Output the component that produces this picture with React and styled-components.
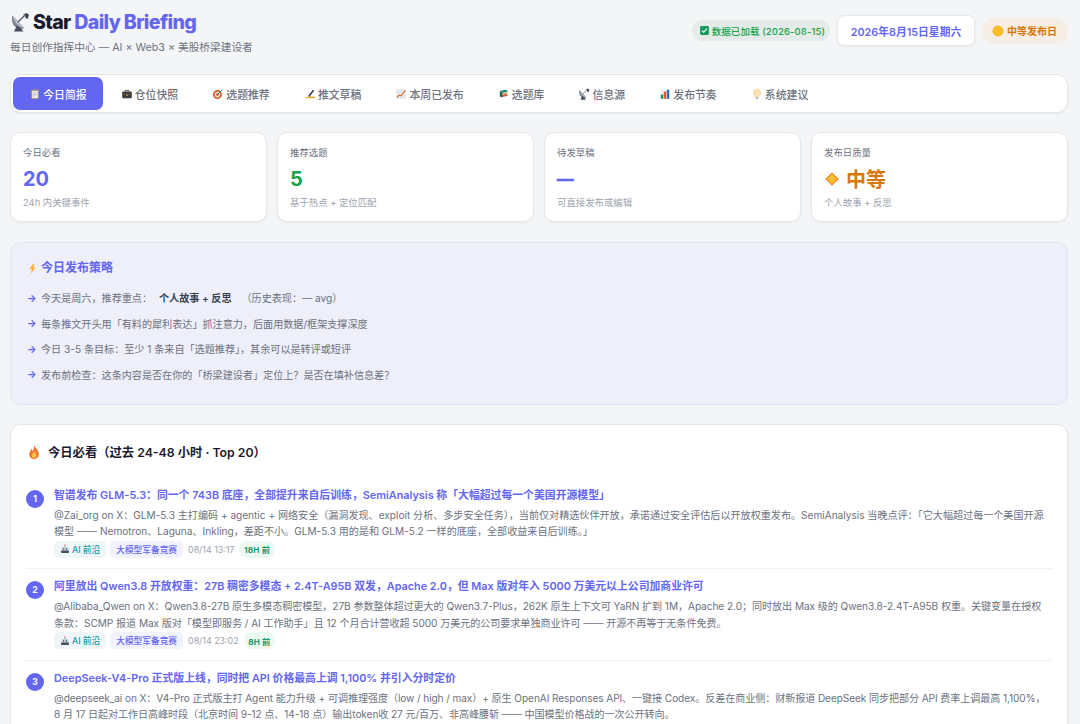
import React from 'react';
import styled, { createGlobalStyle } from 'styled-components';

const Global = createGlobalStyle`
  html, body { margin: 0; padding: 0; height: 724px; overflow: hidden; background: #f4f5f7; }
  body { font-family: Inter, "Noto Sans CJK SC", sans-serif; color: #1a1a2e; -webkit-font-smoothing: antialiased; }
  * { box-sizing: border-box; }
`;

const Page = styled.div`
  padding: 11px 12px 0 10px;
`;
const Header = styled.header`
  display: flex;
  justify-content: space-between;
  align-items: flex-start;
  height: 63px;
`;
const Brand = styled.div`
  display: flex;
  flex-direction: column;
  gap: 8px;
`;
const Title = styled.h1`
  margin: 0;
  display: flex;
  align-items: center;
  gap: 3px;
  font-size: 19.6px;
  line-height: 22px;
  font-weight: 800;
  letter-spacing: -0.65px;
  color: #1a1a2e;
  span { color: #6366f1; }
`;
const Sub = styled.div`
  font-size: 10.7px;
  line-height: 14px;
  color: #6b7280;
`;
const Meta = styled.div`
  display: flex;
  align-items: center;
  gap: 7px;
  margin-top: 4px;
`;
const LoadBadge = styled.div`
  display: flex;
  align-items: center;
  gap: 2px;
  height: 21px;
  padding: 0 5px 0 7px;
  border-radius: 11px;
  background: #e4ebe9;
  color: #16a34a;
  font-size: 9.5px;
  font-weight: 500;
  letter-spacing: 0.1px;
`;
const DateBox = styled.div`
  width: 138px;
  height: 31px;
  display: flex;
  align-items: center;
  justify-content: center;
  background: #fff;
  border: 1px solid #e5e7eb;
  border-radius: 7px;
  box-shadow: 0 1px 2px rgba(0,0,0,.05);
  color: #6366f1;
  font-size: 10.8px;
  font-weight: 600;
`;
const DayPill = styled.div`
  display: flex;
  align-items: center;
  gap: 3px;
  width: 86px;
  height: 26px;
  padding-left: 10px;
  border-radius: 13px;
  background: #f6ede5;
  color: #d97706;
  font-size: 10px;
  font-weight: 600;
`;
const Tabs = styled.nav`
  display: flex;
  gap: 2px;
  height: 39px;
  padding: 2px;
  background: #fff;
  border: 1px solid #e5e7eb;
  border-radius: 11px;
  box-shadow: 0 1px 2px rgba(0,0,0,.06);
`;
const Tab = styled.div`
  display: flex;
  align-items: center;
  gap: 2.2px;
  height: 33px;
  padding: 0 16px;
  border-radius: 7px;
  font-size: 10.85px;
  font-weight: 500;
  white-space: nowrap;
  color: ${p => (p.$active ? '#fff' : '#6b7280')};
  background: ${p => (p.$active ? '#6366f1' : 'transparent')};
`;
const Cards = styled.section`
  display: grid;
  grid-template-columns: repeat(4, 1fr);
  gap: 10px;
  margin-top: 19px;
`;
const Card = styled.div`
  height: 90px;
  padding: 14px 12px;
  background: #fff;
  border: 1px solid #e5e7eb;
  border-radius: 10px;
  box-shadow: 0 1px 2px rgba(0,0,0,.05);
`;
const CardLabel = styled.div`
  font-size: 9.4px;
  line-height: 12px;
  color: #6b7280;
`;
const CardValue = styled.div`
  display: flex;
  align-items: center;
  gap: 6px;
  margin-top: 6px;
  height: 27px;
  font-size: 20px;
  font-weight: 700;
  color: ${p => p.$color};
`;
const Dash = styled.span`
  font-size: 16.5px;
  -webkit-text-stroke: 0.7px #6366f1;
`;
const CardHint = styled.div`
  margin-top: 5px;
  font-size: 9.4px;
  line-height: 12px;
  color: #9ca3af;
`;
const Strategy = styled.section`
  margin-top: 20px;
  height: 163px;
  padding: 17px 16px;
  background: #eeeff9;
  border: 1px solid #e2e3f6;
  border-radius: 11px;
`;
const StrategyTitle = styled.h3`
  margin: 0 0 9px;
  display: flex;
  align-items: center;
  gap: 3px;
  font-size: 12px;
  line-height: 16px;
  font-weight: 600;
  color: #6366f1;
`;
const Rule = styled.div`
  display: flex;
  align-items: center;
  height: 25.5px;
  font-size: 10.1px;
  color: #6b7280;
  white-space: pre;
  i { font-style: normal; font-weight: 700; color: #6366f1; width: 14px; font-size: 10px; flex: none; }
  b { font-weight: 600; color: #374151; margin: 0 10px 0 7px; }
`;
const Panel = styled.section`
  margin-top: 19px;
  padding: 18px 15px 0;
  background: #fff;
  border: 1px solid #e5e7eb;
  border-radius: 11px;
  box-shadow: 0 1px 2px rgba(0,0,0,.05);
`;
const PanelTitle = styled.h2`
  margin: 0 0 16.5px;
  display: flex;
  align-items: center;
  gap: 6px;
  height: 18px;
  font-size: 12.3px;
  font-weight: 600;
  color: #1a1a2e;
`;
const Item = styled.article`
  display: flex;
  gap: 10px;
  padding: 8px 0 0;
  height: 91.5px;
  border-bottom: 1px solid #f0f1f3;
`;
const Num = styled.div`
  flex: none;
  width: 18px;
  height: 18px;
  margin-top: 4px;
  border-radius: 50%;
  background: #6366f1;
  color: #fff;
  font-size: 8.6px;
  font-weight: 700;
  display: flex;
  align-items: center;
  justify-content: center;
`;
const ItemBody = styled.div`
  flex: 1;
  min-width: 0;
`;
const ItemTitle = styled.h4`
  margin: 0 0 3px;
  font-size: 10.85px;
  line-height: 18px;
  font-weight: 600;
  color: #6366f1;
`;
const ItemText = styled.p`
  margin: 0;
  max-width: 995px;
  font-size: 10.08px;
  line-height: 16.5px;
  letter-spacing: ${p => p.$track}px;
  color: #6b7280;
`;
const Tags = styled.div`
  display: flex;
  align-items: center;
  gap: 4px;
  margin-top: 1px;
`;
const Tag = styled.span`
  display: inline-flex;
  align-items: center;
  gap: 2px;
  height: 17px;
  padding: 0 6px;
  border-radius: 5px;
  font-size: 8.7px;
  font-weight: 500;
  color: ${p => p.$color};
  background: ${p => p.$bg};
`;
const Time = styled.span`
  margin: 0 1px 0 1px;
  font-size: 8.9px;
  color: #9ca3af;
`;
const Ago = styled.span`
  display: inline-flex;
  align-items: center;
  height: 17px;
  padding: 0 4.5px;
  border-radius: 8px;
  background: #ecf8f2;
  color: #159a6a;
  font-size: 8.2px;
  letter-spacing: 0.2px;
  font-weight: 700;
`;
const Glyph = styled.svg`
  flex: none;
  display: block;
`;

const drawings = {
  dish: <><path d="M2.500 3.500c-2 6 1 13 8 13.500 2 .1 3.300-.5 3.500-1z" fill="#7c8792"/><path d="M2.500 3.500L14 16c-5-.5-10-5.500-11.500-12.500z" fill="#b4bcc5"/><path d="M8 10l6.500-6.500" stroke="#4b5563" strokeWidth="1.200"/><path d="M13 2.500l4-1.500 2 2-1.500 4-2-1-.5-2.500z" fill="#3f4852"/><path d="M4 19.500l3-6 4 3 2.500 3z" fill="#47505a"/></>,
  clip: <><rect x="4" y="3" width="12" height="15" rx="1.500" fill="#c9a676"/><rect x="5.500" y="5" width="9" height="11.500" fill="#f3f4f6"/><rect x="7" y="1.800" width="6" height="3" rx="1" fill="#8b939c"/><path d="M7 8h6M7 10.500h6M7 13h4" stroke="#9ca3af"/></>,
  case: <><path d="M7 6V4h6v2" fill="none" stroke="#4b3a2f" strokeWidth="1.400"/><rect x="2" y="6" width="16" height="11" rx="1.500" fill="#3f3a38"/><rect x="8.500" y="10" width="3" height="3" fill="#c49a45"/><path d="M2 11h16" stroke="#6b5f55"/></>,
  dart: <><circle cx="9" cy="11" r="7.500" fill="#d9572f"/><circle cx="9" cy="11" r="4.700" fill="#f4e2c4"/><circle cx="9" cy="11" r="2.300" fill="#d9572f"/><path d="M9 11l8-8" stroke="#0e8f8f" strokeWidth="1.600"/></>,
  write: <><path d="M2 16c3-2 6-2 16-2v3H3z" fill="#f3a82f"/><path d="M7 13L15 3l2 1.500L9 15z" fill="#384150"/></>,
  chart: <><rect x="2" y="2" width="16" height="16" fill="#e5e7eb"/><path d="M3 16l4-4 3 1 7-9" fill="none" stroke="#e0672a" strokeWidth="1.700"/></>,
  books: <><path d="M3 5l10-2 4 3-10 2z" fill="#16806f"/><path d="M3 9l11-2 3 2-10 2z" fill="#d8a25a"/><path d="M4 12l10-2 3 3-10 2z" fill="#c2573d"/><path d="M3 5v9l4 2V8z" fill="#2c5f52"/></>,
  bars: <><rect x="2" y="2" width="16" height="16" fill="#eef0f3"/><rect x="3" y="11" width="4" height="7" fill="#159a5e"/><rect x="8" y="6" width="4" height="12" fill="#e0552f"/><rect x="13" y="3" width="4" height="15" fill="#2f6fb3"/></>,
  bulb: <><path d="M10 2a6 6 0 0 0-3.500 10.800c.7.6 1 1.200 1 2.200h5c0-1 .3-1.600 1-2.200A6 6 0 0 0 10 2z" fill="#fde4b5" stroke="#f3bf73"/><rect x="8" y="15.500" width="4" height="3" rx="1" fill="#aab1ba"/></>,
  check: <><rect x="2" y="2" width="16" height="16" rx="2.500" fill="#159a5e"/><path d="M5.500 10.200l3 3 6-6.500" fill="none" stroke="#fff" strokeWidth="2"/></>,
  dot: <circle cx="10" cy="10" r="8.500" fill="#fbbf24" stroke="#f59e0b"/>,
  diamond: <><path d="M10 1.500l8.500 8.500-8.500 8.500L1.500 10z" fill="#e8862b"/><path d="M10 3.500l6.500 6.500-6.500 6.500L3.500 10z" fill="#fbbc2d"/></>,
  bolt: <path d="M12 1L4 11h5l-2 8 9-11h-5l3-7z" fill="#fbb03b"/>,
  fire: <><path d="M10 1c1 4 6 6 6 12a6 6 0 0 1-12 0c0-3 2-4 2.500-7 1 1 1.500 2 1.500 3 1.500-2 2.500-5 2-8z" fill="#f3772a"/><path d="M10 9c.5 2 3 3 3 5.500a3 3 0 0 1-6 0c0-2 2-3 3-5.500z" fill="#fdc04a"/></>,
  robot: <><rect x="3" y="6" width="14" height="9" rx="2" fill="#c0d2dc"/><rect x="2" y="13" width="16" height="5" rx="1.500" fill="#46505a"/><circle cx="7" cy="10" r="1.300" fill="#3b4651"/><circle cx="13" cy="10" r="1.300" fill="#3b4651"/><path d="M10 6V3" stroke="#7a8794" strokeWidth="1.300"/><circle cx="10" cy="2.500" r="1.300" fill="#d9572f"/></>,
};

const Icon = ({ name, size = 12 }) => (
  <Glyph viewBox="0 0 20 20" width={size} height={size} aria-hidden="true">{drawings[name]}</Glyph>
);

const tabs = [
  ['clip', '今日简报'], ['case', '仓位快照'], ['dart', '选题推荐'], ['write', '推文草稿'],
  ['chart', '本周已发布'], ['books', '选题库'], ['dish', '信息源'], ['bars', '发布节奏'], ['bulb', '系统建议'],
];

const news = [
  {
    title: '智谱发布 GLM-5.3：同一个 743B 底座，全部提升来自后训练，SemiAnalysis 称「大幅超过每一个美国开源模型」',
    text: '@Zai_org on X：GLM-5.3 主打编码 + agentic + 网络安全（漏洞发现、exploit 分析、多步安全任务），当前仅对精选伙伴开放，承诺通过安全评估后以开放权重发布。SemiAnalysis 当晚点评：「它大幅超过每一个美国开源模型 —— Nemotron、Laguna、Inkling，差距不小。GLM-5.3 用的是和 GLM-5.2 一样的底座，全部收益来自后训练。」',
    time: '08/14 13:17', ago: '18H 前', track: 0,
  },
  {
    title: '阿里放出 Qwen3.8 开放权重：27B 稠密多模态 + 2.4T-A95B 双发，Apache 2.0，但 Max 版对年入 5000 万美元以上公司加商业许可',
    text: '@Alibaba_Qwen on X：Qwen3.8-27B 原生多模态稠密模型，27B 参数整体超过更大的 Qwen3.7-Plus，262K 原生上下文可 YaRN 扩到 1M，Apache 2.0；同时放出 Max 级的 Qwen3.8-2.4T-A95B 权重。关键变量在授权条款：SCMP 报道 Max 版对「模型即服务 / AI 工作助手」且 12 个月合计营收超 5000 万美元的公司要求单独商业许可 —— 开源不再等于无条件免费。',
    time: '08/14 23:02', ago: '8H 前', track: -0.05,
  },
  {
    title: 'DeepSeek-V4-Pro 正式版上线，同时把 API 价格最高上调 1,100% 并引入分时定价',
    text: '@deepseek_ai on X：V4-Pro 正式版主打 Agent 能力升级 + 可调推理强度（low / high / max）+ 原生 OpenAI Responses API、一键接 Codex。反差在商业侧：财新报道 DeepSeek 同步把部分 API 费率上调最高 1,100%，8 月 17 日起对工作日高峰时段（北京时间 9-12 点、14-18 点）输出token收 27 元/百万、非高峰腰斩 —— 中国模型价格战的一次公开转向。',
    track: -0.08,
  },
];

export default function App() {
  return (
    <Page>
      <Global />
      <Header>
        <Brand>
          <Title><Icon name="dish" size={20} /><div>Star <span>Daily Briefing</span></div></Title>
          <Sub>每日创作指挥中心 — AI × Web3 × 美股桥梁建设者</Sub>
        </Brand>
        <Meta>
          <LoadBadge><Icon name="check" size={11} />数据已加载 (2026-08-15)</LoadBadge>
          <DateBox>2026年8月15日星期六</DateBox>
          <DayPill><Icon name="dot" size={12} />中等发布日</DayPill>
        </Meta>
      </Header>
      <Tabs>
        {tabs.map(([icon, label], i) => (
          <Tab key={label} $active={i === 0}><Icon name={icon} size={12} />{label}</Tab>
        ))}
      </Tabs>
      <Cards>
        <Card>
          <CardLabel>今日必看</CardLabel>
          <CardValue $color="#6366f1">20</CardValue>
          <CardHint>24h 内关键事件</CardHint>
        </Card>
        <Card>
          <CardLabel>推荐选题</CardLabel>
          <CardValue $color="#16a34a">5</CardValue>
          <CardHint>基于热点 + 定位匹配</CardHint>
        </Card>
        <Card>
          <CardLabel>待发草稿</CardLabel>
          <CardValue $color="#6366f1"><Dash>—</Dash></CardValue>
          <CardHint>可直接发布或编辑</CardHint>
        </Card>
        <Card>
          <CardLabel>发布日质量</CardLabel>
          <CardValue $color="#d97706"><Icon name="diamond" size={16} />中等</CardValue>
          <CardHint>个人故事 + 反思</CardHint>
        </Card>
      </Cards>
      <Strategy>
        <StrategyTitle><Icon name="bolt" size={11} />今日发布策略</StrategyTitle>
        <Rule><i>→</i>今天是周六，推荐重点：<b>个人故事 + 反思</b>（历史表现：— avg）</Rule>
        <Rule><i>→</i>每条推文开头用「有料的犀利表达」抓注意力，后面用数据/框架支撑深度</Rule>
        <Rule><i>→</i>今日 3-5 条目标：至少 1 条来自「选题推荐」，其余可以是转评或短评</Rule>
        <Rule><i>→</i>发布前检查：这条内容是否在你的「桥梁建设者」定位上？是否在填补信息差？</Rule>
      </Strategy>
      <Panel>
        <PanelTitle><Icon name="fire" size={16} />今日必看（过去 24-48 小时 · Top 20）</PanelTitle>
        {news.map((n, i) => (
          <Item key={n.title}>
            <Num>{i + 1}</Num>
            <ItemBody>
              <ItemTitle>{n.title}</ItemTitle>
              <ItemText $track={n.track}>{n.text}</ItemText>
              {n.time && (
                <Tags>
                  <Tag $color="#0e9aa7" $bg="#eef6f8"><Icon name="robot" size={10} />AI 前沿</Tag>
                  <Tag $color="#6366f1" $bg="#f1f2fd">大模型军备竞赛</Tag>
                  <Time>{n.time}</Time>
                  <Ago>{n.ago}</Ago>
                </Tags>
              )}
            </ItemBody>
          </Item>
        ))}
      </Panel>
    </Page>
  );
}
